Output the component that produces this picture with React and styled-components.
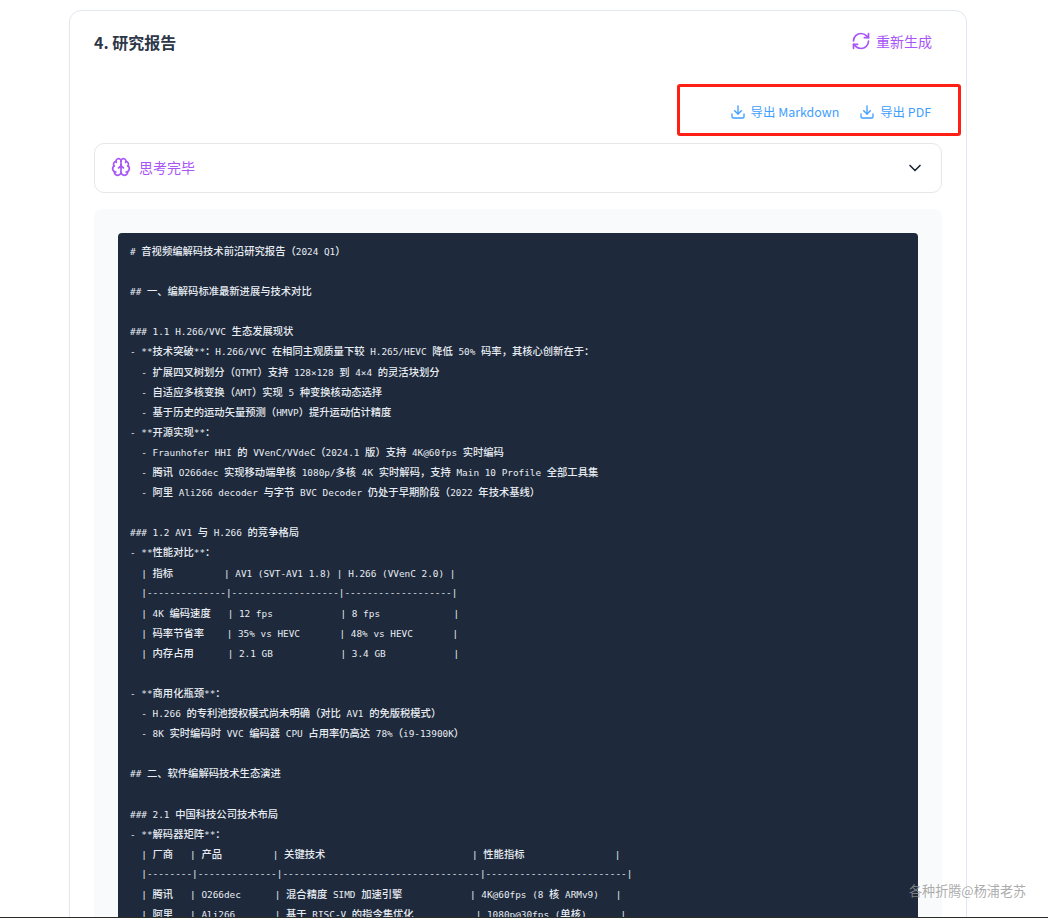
import React from "react";
import styled, { createGlobalStyle } from "styled-components";
import { Brain, ChevronDown, Download, RefreshCw } from "lucide-react";

const GlobalStyle = createGlobalStyle`
  html, body {
    margin: 0;
    padding: 0;
    height: 918px;
    overflow: hidden;
    background: #fff;
    font-family: "Noto Sans CJK SC", "Noto Sans", sans-serif;
  }
  #root { height: 918px; }
`;

const Page = styled.div`
  position: relative;
  height: 918px;
  box-sizing: border-box;
  padding: 10px 81px 0 69px;
  overflow: hidden;
  border-bottom: 1px solid #2b2b26;
`;

const Card = styled.section`
  box-sizing: border-box;
  height: 1200px;
  padding: 15px 24px 0;
  background: #fff;
  border: 1px solid #e2e8f0;
  border-radius: 12px;
`;

const Header = styled.header`
  display: flex;
  align-items: center;
  justify-content: space-between;
  height: 32px;
  padding-right: 10px;
`;

const Title = styled.h2`
  margin: 0;
  font-size: 16px;
  font-weight: 700;
  color: #2d3748;
`;

const RegenerateButton = styled.button`
  display: flex;
  align-items: center;
  gap: 5px;
  padding: 0;
  margin-top: -2px;
  border: 0;
  background: none;
  font: inherit;
  font-size: 14px;
  color: #a855f7;
`;

const ExportBar = styled.div`
  display: flex;
  justify-content: flex-end;
  gap: 20px;
  margin-top: 44px;
  padding-right: 11px;
`;

const ExportButton = styled.button`
  display: flex;
  align-items: center;
  gap: 5px;
  height: 20px;
  padding: 0;
  border: 0;
  background: none;
  font-family: "Noto Sans CJK SC", sans-serif;
  font-size: 12.4px;
  color: #409eff;
`;

const ThinkingPanel = styled.div`
  display: flex;
  align-items: center;
  justify-content: space-between;
  box-sizing: border-box;
  height: 50px;
  margin-top: 21px;
  padding: 0 16px 0 16px;
  border: 1px solid #e5e7eb;
  border-radius: 10px;
`;

const ThinkingLabel = styled.div`
  display: flex;
  align-items: center;
  gap: 8px;
  margin-top: -2px;
  font-size: 14px;
  color: #a855f7;
`;

const ReportBox = styled.div`
  margin-top: 16px;
  padding: 24px;
  background: #f9fafb;
  border-radius: 8px;
`;

const CodeBlock = styled.pre`
  margin: 0;
  padding: 8px 12px;
  background: #1e293b;
  border-radius: 4px;
  color: #e8edf3;
  font-family: "DejaVu Sans Mono", monospace;
  font-size: 9.38px;
`;

const CodeLine = styled.div`
  height: 20.1px;
  line-height: 20.1px;
  white-space: pre;
`;

const Cjk = styled.span`
  font-family: "Noto Sans CJK SC", sans-serif;
  font-size: 10.3px;
  font-weight: 500;
`;

const Annotation = styled.div`
  position: absolute;
  left: 677px;
  top: 84px;
  width: 284px;
  height: 52px;
  box-sizing: border-box;
  border: 3px solid #ff1f14;
  border-radius: 3px;
`;

const Watermark = styled.div`
  position: absolute;
  left: 909px;
  top: 881px;
  font-size: 13.1px;
  line-height: 20px;
  white-space: nowrap;
  color: rgba(150, 150, 150, 0.8);
`;

const REPORT = [
  "# 音视频编解码技术前沿研究报告（2024 Q1）",
  "",
  "## 一、编解码标准最新进展与技术对比",
  "",
  "### 1.1 H.266/VVC 生态发展现状",
  "- **技术突破**：H.266/VVC 在相同主观质量下较 H.265/HEVC 降低 50% 码率，其核心创新在于：",
  "  - 扩展四叉树划分（QTMT）支持 128×128 到 4×4 的灵活块划分",
  "  - 自适应多核变换（AMT）实现 5 种变换核动态选择",
  "  - 基于历史的运动矢量预测（HMVP）提升运动估计精度",
  "- **开源实现**：",
  "  - Fraunhofer HHI 的 VVenC/VVdeC（2024.1 版）支持 4K@60fps 实时编码",
  "  - 腾讯 O266dec 实现移动端单核 1080p/多核 4K 实时解码，支持 Main 10 Profile 全部工具集",
  "  - 阿里 Ali266 decoder 与字节 BVC Decoder 仍处于早期阶段（2022 年技术基线）",
  "",
  "### 1.2 AV1 与 H.266 的竞争格局",
  "- **性能对比**：",
  "  | 指标         | AV1 (SVT-AV1 1.8) | H.266 (VVenC 2.0) |",
  "  |--------------|-------------------|-------------------|",
  "  | 4K 编码速度   | 12 fps            | 8 fps             |",
  "  | 码率节省率    | 35% vs HEVC       | 48% vs HEVC       |",
  "  | 内存占用      | 2.1 GB            | 3.4 GB            |",
  "",
  "- **商用化瓶颈**：",
  "  - H.266 的专利池授权模式尚未明确（对比 AV1 的免版税模式）",
  "  - 8K 实时编码时 VVC 编码器 CPU 占用率仍高达 78%（i9-13900K）",
  "",
  "## 二、软件编解码技术生态演进",
  "",
  "### 2.1 中国科技公司技术布局",
  "- **解码器矩阵**：",
  "  | 厂商   | 产品         | 关键技术                          | 性能指标                |",
  "  |--------|--------------|-----------------------------------|-------------------------|",
  "  | 腾讯   | O266dec      | 混合精度 SIMD 加速引擎            | 4K@60fps (8 核 ARMv9)   |",
  "  | 阿里   | Ali266       | 基于 RISC-V 的指令集优化           | 1080p@30fps (单核)      |",
];

// CJK glyphs run narrower than two mono cells here, so they get their own size
const renderRuns = (line) =>
  line
    .split(/([\u3000-\u30ff\u4e00-\u9fff\uff00-\uffef]+)/)
    .map((run, i) => (i % 2 ? <Cjk key={i}>{run}</Cjk> : run));

const App = () => (
  <Page>
    <GlobalStyle />
    <Card>
      <Header>
        <Title>4. 研究报告</Title>
        <RegenerateButton>
          <RefreshCw size={20} strokeWidth={2} />
          重新生成
        </RegenerateButton>
      </Header>
      <ExportBar>
        <ExportButton>
          <Download size={16} strokeWidth={2} />
          导出 Markdown
        </ExportButton>
        <ExportButton>
          <Download size={16} strokeWidth={2} />
          导出 PDF
        </ExportButton>
      </ExportBar>
      <ThinkingPanel>
        <ThinkingLabel>
          <Brain size={20} strokeWidth={2} />
          思考完毕
        </ThinkingLabel>
        <ChevronDown size={20} strokeWidth={2} color="#1f2937" />
      </ThinkingPanel>
      <ReportBox>
        <CodeBlock>
          {REPORT.map((line, i) => (
            <CodeLine key={i}>{renderRuns(line)}</CodeLine>
          ))}
        </CodeBlock>
      </ReportBox>
    </Card>
    <Annotation />
    <Watermark>各种折腾@杨浦老苏</Watermark>
  </Page>
);

export default App;
